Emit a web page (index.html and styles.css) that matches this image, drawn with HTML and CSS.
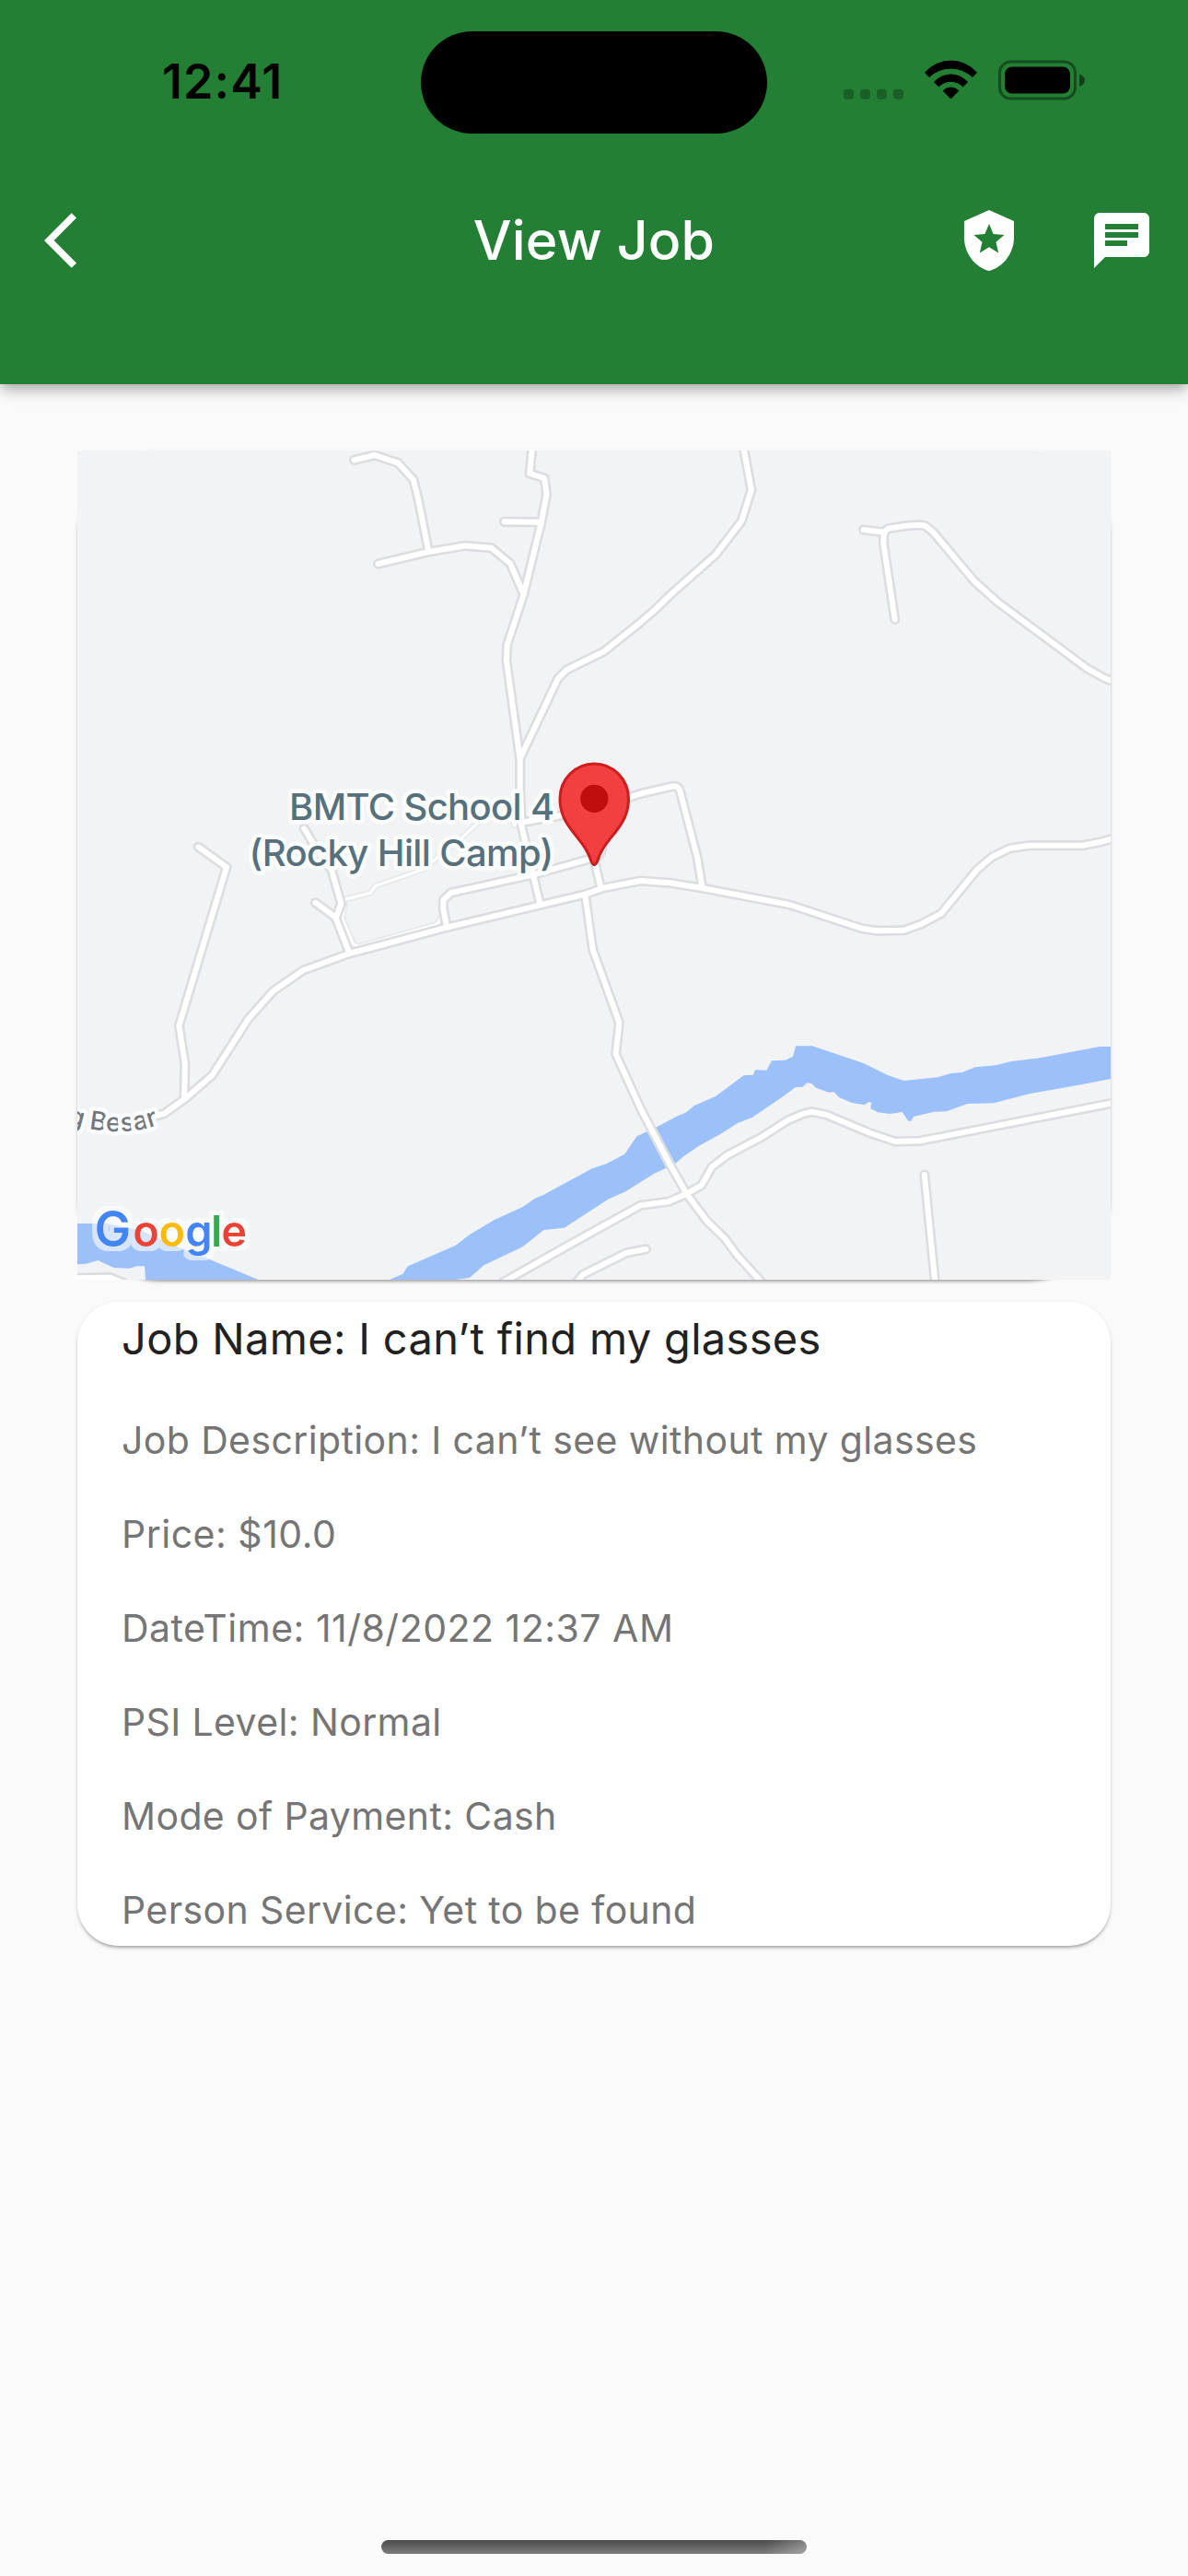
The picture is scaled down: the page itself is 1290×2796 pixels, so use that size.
FILE: index.html
```html
<!DOCTYPE html>
<html lang="en">
<head>
<meta charset="utf-8">
<meta name="viewport" content="width=device-width">
<title>View Job</title>
<link rel="stylesheet" href="styles.css">
</head>
<body>
<header class="app-bar">
  <div class="status-bar">
    <span class="time">12:41</span>
    <div class="island"></div>
    <svg class="indicators" viewBox="916 58.5 262 60" aria-hidden="true">
      <g fill="#000" fill-opacity=".25">
        <rect x="916" y="96.2" width="11" height="11" rx="3.6"/>
        <rect x="934" y="96.2" width="11" height="11" rx="3.6"/>
        <rect x="952" y="96.2" width="11" height="11" rx="3.6"/>
        <rect x="970" y="96.2" width="11" height="11" rx="3.6"/>
      </g>
      <g stroke="#000" stroke-width="1" stroke-linejoin="round">
        <path d="M1004.5 78.3A37.2 37.2 0 0 1 1060.5 78.3L1056 83A34 34 0 0 0 1009 83Z"/>
        <path d="M1014.5 88.6A24 24 0 0 1 1050.5 88.6L1045.7 93.4A18.5 18.5 0 0 0 1019.3 93.4Z"/>
        <path d="M1024.2 98A11.5 11.5 0 0 1 1040.8 98L1032.5 106.5Z"/>
      </g>
      <rect x="1085.5" y="66.5" width="82" height="40" rx="12" fill="none" stroke="#000" stroke-opacity=".4" stroke-width="3"/>
      <rect x="1091" y="72" width="71" height="29" rx="8"/>
      <path d="M1172 80c3.5 1.3 6 4 6 6.7s-2.5 5.4-6 6.7z" fill-opacity=".5"/>
    </svg>
  </div>
  <nav class="toolbar">
    <svg class="icon" viewBox="0 0 24 24" aria-label="Back"><path d="M11.67 3.87L9.9 2.1 0 12l9.9 9.9 1.77-1.77L3.54 12z"/></svg>
    <h1 class="title">View Job</h1>
    <div class="actions">
      <svg class="icon" viewBox="0 0 24 24" aria-label="Police"><path d="M12 1L3 5v6c0 5.55 3.84 10.74 9 12 5.16-1.26 9-6.45 9-12V5l-9-4zm2.5 11.59l.9 3.88-3.4-2.05-3.4 2.05.9-3.87-3-2.59 3.96-.34L12 6.02l1.54 3.64 3.96.34-3 2.59z"/></svg>
      <svg class="icon" viewBox="0 0 24 24" aria-label="Chat"><path d="M20 2H4c-1.1 0-1.99.9-1.99 2L2 22l4-4h14c1.1 0 2-.9 2-2V4c0-1.1-.9-2-2-2zM6 9h12v2H6V9zm8 5H6v-2h8v2zm4-6H6V6h12v2z"/></svg>
    </div>
  </nav>
</header>

<main class="content">
  <section class="map-card">
    <svg class="map" viewBox="84 489 1122 900" role="img" aria-label="Map">
      <defs>
        <g id="service-roads">
          <path d="M526 887L500.5 910L475.7 930L460.4 943.3L407.5 961.7L402.2 969.3L375 976L371.6 996.7L383.8 1025L389.6 1027.3L474.9 1003.3L482 990"/>
          <path d="M556 886L558.7 896L567.5 896"/>
        </g>
        <g id="roads">
          <path d="M384.6 499.3L406.8 494L432 502.3L448.9 520.7L453.8 540L465.3 598.3"/>
          <path d="M410.6 612L465.3 599L505.5 592.3L533.8 594.7L554.1 611.7L568.7 645"/>
          <path d="M578.2 483L575.2 514L591.2 519L593.5 536.7L587.8 566.7L568.7 645L550.7 700L549.9 716.7L564.8 825V857L566.4 896.7L579 950L586.6 982"/>
          <path d="M547.6 566.3L587.8 566.7"/>
          <path d="M564.8 823L605.8 736.7L615 727.3L656.4 706.7L692.7 677.7L710.7 662.3L731 642.7L776.9 602.3L805.2 565.7L815.9 531.7L806.8 483"/>
          <path d="M937.6 575L959.8 577.7"/>
          <path d="M971.7 672.3L959.4 590L959.8 577.7L964.4 573.7L983.6 570.7L998.9 569.7L1004.6 570.7L1013.4 577.7L1058.2 631L1083 653.3L1180.6 725.7L1198.6 735.7L1212 741"/>
          <path d="M566.4 892.7L609.6 885L677.4 867.3L698.5 860.7L731 853.3Q737 853 738.5 859L757 930L762.7 964"/>
          <path d="M485.2 1006.7L481.4 986.7V976.7L489.8 969L579 949.3L643 931.7Q652 930 653.7 922"/>
          <path d="M644.5 930L652.5 964"/>
          <path d="M330.2 899.3L353.2 936.7L359.7 943L370.4 980.7L364.7 996.7L379.2 1034"/>
          <path d="M342.5 979.7L364.7 996"/>
          <path d="M215.4 919.3L246 941.3L194.4 1113.3L200.9 1155L200 1192"/>
          <path d="M82 1387.3L119.8 1386.7L135 1393"/>
          <path d="M1212 1196.5L998.9 1238.3L972 1239L945.3 1230L897.5 1210L881.4 1206.7L872.6 1208.7L855.4 1216L828.6 1233.3L789.5 1254L773 1266.7L761.6 1286.7L745.5 1295.7L726 1304.3L695.4 1308.3L620 1350L546.5 1391.7"/>
          <path d="M701.5 1355.7L680 1360L633.4 1383.3L623 1395"/>
          <path d="M1003.8 1275L1015.7 1395"/>
          <path d="M635.3 970.7L643.7 1030.7L672.4 1110L668.6 1144L696.5 1205L727.2 1263.3L745.5 1295.7L767.3 1325L787.2 1344.3L799.9 1361.7L830 1395"/>
          <path d="M150 1217L179 1208.3L202 1191.7L230.7 1166.7L269.8 1105.7L296.6 1075.7L329 1053.3L379.2 1035L485.2 1006.7L586.6 982.3L635.3 970.7L654.4 964L695.4 956L727.2 958.3L762.7 964L857.3 982L935.7 1007.7L952.2 1010.3L981.6 1009.7L1000.8 1002.7L1021.8 991.7L1060.9 944L1077.3 930L1096.5 920.7L1117.5 917.7H1175L1196 913.7L1212 909"/>
        </g>
        <path id="road-label-line" d="M72.500 1219Q137 1239 186 1215"/>
        <filter id="halo" x="90" y="1290" width="200" height="99" filterUnits="userSpaceOnUse">
          <feMorphology in="SourceAlpha" operator="dilate" radius="5" result="grown"/>
          <feGaussianBlur in="grown" stdDeviation=".6" result="soft"/>
          <feFlood flood-color="#fff" flood-opacity=".6"/>
          <feComposite in2="soft" operator="in"/>
          <feMerge><feMergeNode/><feMergeNode in="SourceGraphic"/></feMerge>
        </filter>
      </defs>

      <rect x="84" y="489" width="1122" height="900" fill="#f1f3f5"/>

      <g fill="#9cc0f9">
        <path d="M423 1389L437.4 1382.7L443 1374.3L471.8 1361.7L494.8 1351.7L510 1340L536.9 1324L567.5 1310L581 1300.7L590.5 1296.7L620 1280.7L643 1268.3L658.3 1263.3L678.2 1252.7L691.6 1233.3L711.8 1224L734.8 1211.7L744.4 1207.7L754 1200L777 1190L807.5 1167.3L817.9 1166.7L820 1161.3L832.4 1161.7L838 1151.3L852.7 1150.7L861 1146.7L864.2 1135.3H882L937.6 1154L964.4 1167.3L981.7 1173L1018 1169.3L1032.6 1165L1044.8 1164L1059 1158.3L1081 1156.3L1098.4 1152L1129 1148.3L1194 1136H1208V1170.5L1171 1177.7L1117.5 1187.3L1079 1197.3L1050.5 1198L1027.6 1206.3L1014 1206.7L992 1212L989.3 1216.7H986.2L979.7 1207L966.3 1209L953 1207.3L945.3 1203.3L946.4 1196.7L943.4 1196L938.4 1199.3L924.2 1196.7L910.9 1191L905.9 1185.3L900 1185.7L886 1180.7L881.4 1176L876.4 1175.3L871.4 1179.7L863.8 1180L851.5 1189.3L817 1212.7L800.6 1219.3L782.6 1230.7L759.7 1243.3L742.5 1255L732.9 1263.3L710 1274L679.3 1293.3L660.2 1301.7L637.2 1316.7L612.7 1332.7L590.5 1335L567.5 1353.3L525.4 1373.3L510 1386.7L495.5 1389Z"/>
        <path d="M84 1328H116L141 1333L152 1335L194 1354L202 1356.7L227 1366.7L280.5 1389H158L157 1374.3H148.5L140.8 1376.7L123.6 1376L106.4 1368L93.7 1371.7L84 1372.3Z"/>
      </g>

      <g class="road">
        <use href="#service-roads" stroke="#e8e9ea" stroke-width="7"/>
        <use href="#service-roads" stroke="#fff" stroke-width="3"/>
        <use href="#roads" stroke="#dcdde1" stroke-width="11.2"/>
        <use href="#roads" stroke="#fff" stroke-width="6"/>
      </g>

      <g class="place-label">
        <text x="314" y="890">BMTC School 4</text>
        <text x="270.5" y="940">(Rocky Hill Camp)</text>
      </g>
      <text class="street-label"><textPath href="#road-label-line">g Besar</textPath></text>

      <path d="M612 884C622 902 635 919 640.5 934Q645.3 947 650 934C655.5 919 668.5 902 678 884Z" fill="#5f7f8c"/>
      <path d="M645.3 829C666 829 682.5 846 682.5 867C682.5 882 677 892 668 903.5C658 916 652 923 648.5 935Q645.3 942 642.1 935C638.5 923 632.5 916 622.6 903.5C613.5 892 608 882 608 867C608 846 624.5 829 645.3 829Z" fill="#f23f3f" stroke="#cf1c1f" stroke-width="3"/>
      <circle cx="645.3" cy="866.8" r="15.1" fill="#c00d0d"/>

      <text class="brand" x="102.5 144.2 172.6 201.3 229 240.3" y="1353" filter="url(#halo)"><tspan class="brand-blue brand-capital">G</tspan><tspan class="brand-red">o</tspan><tspan class="brand-yellow">o</tspan><tspan class="brand-blue">g</tspan><tspan class="brand-green">l</tspan><tspan class="brand-red">e</tspan></text>
    </svg>
  </section>

  <section class="job-card">
    <h2 class="job-name">Job Name: I can’t find my glasses</h2>
    <p class="job-row">Job Description: I can’t see without my glasses</p>
    <p class="job-row numeric">Price: $10.0</p>
    <p class="job-row numeric">DateTime: 11/8/2022 12:37 AM</p>
    <p class="job-row">PSI Level: Normal</p>
    <p class="job-row">Mode of Payment: Cash</p>
    <p class="job-row">Person Service: Yet to be found</p>
  </section>
</main>

<div class="home-indicator"></div>
</body>
</html>
```
FILE: styles.css
```css
* {
  box-sizing: border-box;
}

body {
  margin: 0;
  min-height: 2796px;
  display: flex;
  flex-direction: column;
  background: #fafafa;
  font-family: Inter, "Liberation Sans", sans-serif;
}

h1,
h2,
p {
  margin: 0;
  font-weight: 400;
}

svg {
  display: block;
}

/* App bar */

.app-bar {
  height: 417px;
  background: #227f33;
  box-shadow:
    0 6px 12px -3px rgba(0, 0, 0, 0.2),
    0 12px 15px 0 rgba(0, 0, 0, 0.08),
    0 3px 15px 0 rgba(0, 0, 0, 0.12);
}

.status-bar {
  display: grid;
  grid-template-columns: 457px 376px 1fr;
  align-items: center;
  height: 178px;
}

.time {
  padding-left: 176px;
  font-size: 52px;
  font-weight: 600;
  letter-spacing: 1.1px;
  line-height: 1;
}

.island {
  height: 111px;
  border-radius: 56px;
  background: #000;
}

.indicators {
  width: 262px;
  height: 60px;
  margin-left: 83px;
}

.toolbar {
  display: grid;
  grid-template-columns: 1fr auto 1fr;
  align-items: center;
  height: 166px;
  padding: 0 36px 0 48px;
}

.title {
  margin-left: -12px;
  padding-bottom: 2px;
  color: #fff;
  font-size: 59px;
  font-weight: 500;
  letter-spacing: 0.15px;
  line-height: 1;
}

.actions {
  display: flex;
  justify-content: flex-end;
  gap: 72px;
}

.icon {
  width: 72px;
  height: 72px;
  fill: #fff;
}

/* Content */

.content {
  display: flex;
  flex-direction: column;
  gap: 24px;
  padding: 71px 84px 0;
}

.map-card,
.job-card {
  box-shadow:
    0 3px 3px -1px rgba(0, 0, 0, 0.24),
    0 2px 5px 0 rgba(0, 0, 0, 0.13);
}

.map-card {
  height: 901px;
  padding-top: 1px;
  border-radius: 90px;
}

.map {
  width: 1122px;
  height: 900px;
}

.job-card {
  display: flex;
  flex-direction: column;
  gap: 24px;
  height: 699px;
  padding-left: 48px;
  border-radius: 45px;
  background: #fff;
}

.job-name {
  margin-bottom: 7px;
  color: #212121;
  font-size: 47px;
  letter-spacing: 0.32px;
  line-height: 80px;
}

.job-row {
  color: #757575;
  font-size: 41px;
  letter-spacing: 0.38px;
  line-height: 78px;
}

.numeric {
  letter-spacing: 0.5px;
}

/* Map */

.road {
  fill: none;
  stroke-linecap: round;
  stroke-linejoin: round;
}

.place-label {
  fill: #56707c;
  stroke: #fbfcfc;
  stroke-width: 9px;
  stroke-linejoin: round;
  paint-order: stroke;
  font-size: 40px;
  font-weight: 500;
  letter-spacing: -0.64px;
}

.street-label {
  fill: #73787c;
  stroke: #fbfcfc;
  stroke-width: 9px;
  stroke-linejoin: round;
  paint-order: stroke;
  font-size: 28px;
  font-weight: 500;
}

.brand {
  font-size: 47px;
  font-weight: 600;
}

.brand-capital {
  font-size: 53px;
}

.brand-blue {
  fill: #4285f4;
}

.brand-red {
  fill: #ea4335;
}

.brand-yellow {
  fill: #fbbc04;
}

.brand-green {
  fill: #34a853;
}

/* Home indicator */

.home-indicator {
  width: 462px;
  height: 15px;
  margin: auto auto 24px;
  border-radius: 8px;
  background:
    linear-gradient(100deg, transparent 90%, rgba(255, 255, 255, 0.3)),
    linear-gradient(#4a4a4a, #7e7e7e);
}
```
